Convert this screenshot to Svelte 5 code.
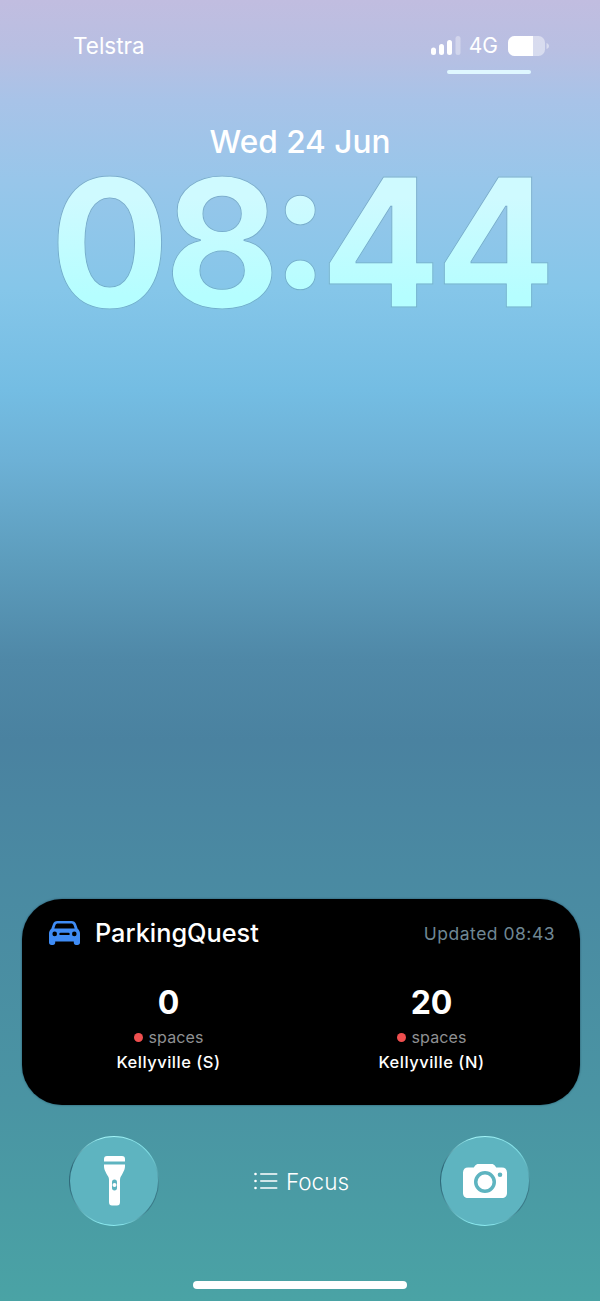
<script>
const lots = [
	{ count: '0', name: 'Kellyville (S)' },
	{ count: '20', name: 'Kellyville (N)' }
]
</script>

<main class="screen">
	<header class="status">
		<span class="carrier">Telstra</span>
		<div class="status-right">
			<div class="status-icons">
				<svg class="signal" width="30" height="19" viewBox="0 0 30 19" aria-hidden="true">
					<rect x="0" y="11.5" width="5" height="7.5" rx="2.5" fill="#fff" />
					<rect x="8" y="8" width="5" height="11" rx="2.5" fill="#fff" />
					<rect x="16" y="4" width="5" height="15" rx="2.5" fill="#fff" />
					<rect x="24.5" y="0" width="5" height="19" rx="2.5" fill="#fff" opacity="0.35" />
				</svg>
				<span class="network">4G</span>
				<svg class="battery" width="41" height="20" viewBox="0 0 41 20" aria-hidden="true">
					<rect x="0" y="0" width="37" height="20" rx="6.5" fill="#fff" opacity="0.45" />
					<path d="M6.5 0H25V20H6.5A6.5 6.5 0 0 1 0 13.500V6.500A6.500 6.500 0 0 1 6.500 0Z" fill="#fff" />
					<path d="M38.500 7C40 7.500 41 8.500 41 10S40 12.500 38.500 13Z" fill="#fff" opacity="0.45" />
				</svg>
			</div>
			<div class="status-line"></div>
		</div>
	</header>

	<section class="lock">
		<div class="date">Wed 24 Jun</div>
		<div class="clock">08<span class="colon">:</span>44</div>
	</section>

	<section class="widget">
		<div class="widget-head">
			<svg class="car" width="31" height="24" viewBox="0 0 31 24" aria-hidden="true">
				<path fill="#3f8cf5" fill-rule="evenodd" d="M8.500 0H22.500C24.800 0 26.300 1.100 27 3L28.700 7.700C30.200 9 31 10.500 31 12.500V21.500C31 23 30 24 28.500 24H27C25.600 24 24.800 23 24.800 21.800V20.500H6.200V21.800C6.200 23 5.400 24 4 24H2.500C1 24 0 23 0 21.500V12.500C0 10.500 .8 9 2.300 7.700L4 3C4.700 1.100 6.200 0 8.500 0ZM9 2.400C7.600 2.400 6.800 3 6.400 4.200L5.300 7.400H25.700L24.600 4.200C24.200 3 23.400 2.400 22 2.400ZM5.700 10.600A2.300 2.300 0 1 0 5.700 15.200A2.300 2.300 0 1 0 5.700 10.600ZM25.300 10.600A2.300 2.300 0 1 0 25.300 15.200A2.300 2.300 0 1 0 25.300 10.600ZM11.500 11.700A1 1 0 0 0 11.500 14.100H19.500A1 1 0 0 0 19.500 11.700Z" />
			</svg>
			<span class="app-name">ParkingQuest</span>
			<span class="updated">Updated 08:43</span>
		</div>
		<div class="lots">
			{#each lots as lot}
				<div class="lot">
					<div class="count">{lot.count}</div>
					<div class="spaces"><i class="dot"></i>spaces</div>
					<div class="lot-name">{lot.name}</div>
				</div>
			{/each}
		</div>
	</section>

	<section class="actions">
		<button class="round" type="button" aria-label="Torch">
			<svg width="22" height="50" viewBox="-1 0 22 50" aria-hidden="true">
				<path fill="#fff" fill-rule="evenodd" d="M3 0H18C20 0 21 1 21 3V5.500H0V3C0 1 1 0 3 0ZM0 8.500H21V10C21 13 20 15 17.500 19.500C16.500 21 16 22 16 24V46C16 48.500 15 49.500 13 49.500H8C6 49.500 5 48.500 5 46V24C5 22 4.500 21 3.500 19.500C1 15 0 13 0 10ZM10.500 23.500C8.800 23.500 8 24.500 8 26V32C8 33.500 8.800 34.500 10.500 34.500S13 33.500 13 32V26C13 24.500 12.200 23.500 10.500 23.500Z" />
				<circle cx="10.500" cy="29" r="2" fill="#fff" />
			</svg>
		</button>
		<div class="focus">
			<svg width="24" height="18" viewBox="0 0 24 18" aria-hidden="true">
				<circle cx="1.500" cy="2" r="1.300" fill="#fff" />
				<circle cx="1.500" cy="9" r="1.300" fill="#fff" />
				<circle cx="1.500" cy="16" r="1.300" fill="#fff" />
				<rect x="6" y="1.200" width="17.500" height="1.600" rx=".8" fill="#fff" />
				<rect x="6" y="8.200" width="17.500" height="1.600" rx=".8" fill="#fff" />
				<rect x="6" y="15.200" width="17.500" height="1.600" rx=".8" fill="#fff" />
			</svg>
			<span>Focus</span>
		</div>
		<button class="round" type="button" aria-label="Camera">
			<svg width="44" height="34" viewBox="0 0 44 34" aria-hidden="true">
				<path fill="#fff" fill-rule="evenodd" d="M15.500 0H28.500C30 0 31 .6 32 1.800L33.200 3.500H39C42 3.500 44 5.400 44 8.500V29C44 32 42 34 39 34H5C2 34 0 32 0 29V8.500C0 5.400 2 3.500 5 3.500H10.800L12 1.800C13 .6 14 0 15.500 0ZM22 7A11 11 0 1 0 22 29A11 11 0 1 0 22 7ZM22 10.500A7.500 7.500 0 1 1 22 25.500A7.500 7.500 0 1 1 22 10.500ZM37 8.500A2.300 2.300 0 1 0 37 13.100A2.300 2.300 0 1 0 37 8.500Z" />
			</svg>
		</button>
	</section>

	<div class="home-bar"></div>
</main>

<style>
:global(body) {
	margin: 0;
}

.screen {
	display: flex;
	flex-direction: column;
	width: 600px;
	height: 1301px;
	overflow: hidden;
	font-family: Inter, 'Noto Sans', sans-serif;
	color: #fff;
	background: linear-gradient(
		180deg,
		#c1bde0 0,
		#b8bfe2 50px,
		#a8c3e8 100px,
		#98c6ea 180px,
		#85c6e9 290px,
		#74bde3 390px,
		#6db1d6 460px,
		#5d9dbd 560px,
		#4f88a7 660px,
		#4a82a0 740px,
		#4a8aa2 880px,
		#4a94a3 1100px,
		#4aa3a5 1301px
	);
}

.status {
	display: flex;
	justify-content: space-between;
	padding: 33px 51px 0 73px;
}

.carrier {
	font-size: 22.5px;
	line-height: 25px;
}

.status-right {
	display: flex;
	flex-direction: column;
	align-items: flex-end;
	padding-top: 1px;
}

.status-icons {
	display: flex;
	align-items: center;
	height: 23px;
}

.signal {
	margin-right: 8px;
}

.network {
	margin-right: 10px;
	font-size: 21px;
}

.status-line {
	width: 84px;
	height: 4px;
	margin-top: 13px;
	margin-right: 18px;
	background: #dff7ff;
	border-radius: 2px;
}

.lock {
	display: flex;
	flex-direction: column;
	align-items: center;
	padding-top: 48px;
}

.date {
	font-size: 31.6px;
	font-weight: 500;
	line-height: 40px;
}

.clock {
	margin-top: 6px;
	font-size: 178px;
	font-weight: 650;
	font-optical-sizing: none;
	line-height: 150px;
	letter-spacing: -5.5px;
	font-feature-settings: 'case';
	background: linear-gradient(180deg, #cffaff 20%, #b5feff 85%);
	-webkit-background-clip: text;
	background-clip: text;
	-webkit-text-fill-color: transparent;
	-webkit-text-stroke: 1px rgba(66, 120, 172, 0.6);
}

.colon {
	margin: 0 -4px;
}

.widget {
	display: flex;
	flex-direction: column;
	height: 206px;
	margin: auto 20px 0 22px;
	box-sizing: border-box;
	background: #000;
	border-radius: 40px;
	box-shadow: 0 0 2px rgba(0, 30, 50, 0.6);
}

.widget-head {
	display: flex;
	align-items: center;
	padding: 21px 25px 0 27px;
}

.app-name {
	margin-left: 15px;
	font-size: 25.3px;
	font-weight: 500;
	line-height: 26px;
}

.updated {
	margin-left: auto;
	font-size: 17.5px;
	letter-spacing: 0.5px;
	color: #6f8794;
}

.lots {
	display: grid;
	grid-template-columns: 263px 263px;
	justify-content: start;
	padding: 37px 0 0 15px;
}

.lot {
	display: flex;
	flex-direction: column;
	align-items: center;
}

.count {
	font-size: 32px;
	font-weight: 700;
	line-height: 40px;
}

.spaces {
	display: flex;
	align-items: center;
	gap: 6px;
	margin-top: 4px;
	font-size: 16px;
	line-height: 20px;
	letter-spacing: 0.1px;
	color: #8f9193;
}

.dot {
	width: 9px;
	height: 9px;
	background: #ef4f4f;
	border-radius: 50%;
}

.lot-name {
	margin-top: 5px;
	font-size: 16.5px;
	font-weight: 500;
	line-height: 20px;
	letter-spacing: 0.5px;
}

.actions {
	display: flex;
	align-items: center;
	justify-content: space-between;
	padding: 31px 70px 0 69px;
}

.round {
	display: flex;
	align-items: center;
	justify-content: center;
	width: 90px;
	height: 90px;
	padding: 0;
	background:
		linear-gradient(#5eb4c0, #5eb4c0) padding-box,
		conic-gradient(#a0f2f6 0deg, #7fdde4 50deg, #3a7a88 100deg, #3a7a88 130deg, #8ae8ee 170deg, #8ae8ee 200deg, #2f6a7a 260deg, #2f6a7a 290deg, #a0f2f6 340deg) border-box;
	border: 1.5px solid transparent;
	border-radius: 50%;
}

.focus {
	display: flex;
	align-items: center;
	gap: 8px;
	margin-left: 4px;
	font-size: 22.5px;
	font-weight: 350;
}

.home-bar {
	flex: none;
	width: 214px;
	height: 8px;
	margin: 55px auto 12px;
	background: #fff;
	border-radius: 4px;
}
</style>
